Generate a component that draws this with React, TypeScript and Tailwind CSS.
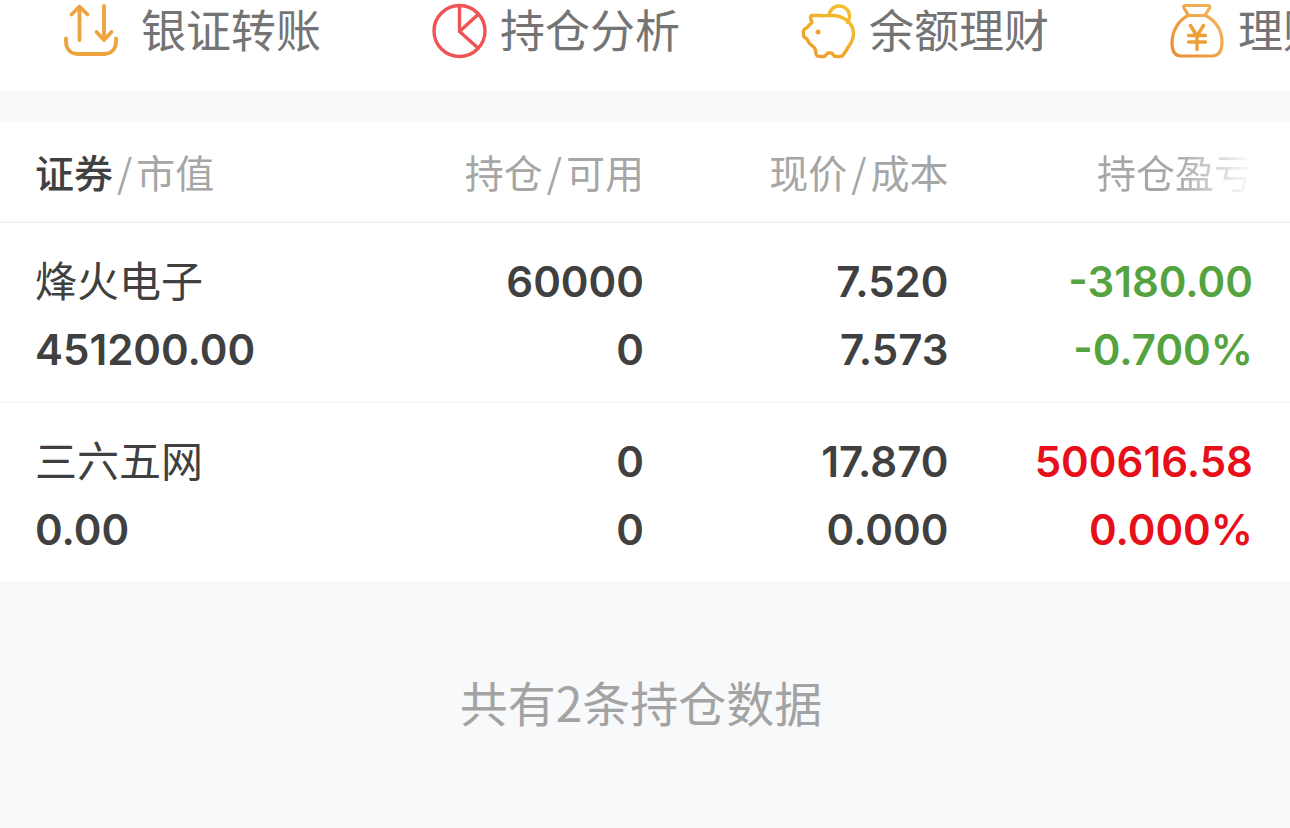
import type { ReactNode } from "react";

type Tone = "up" | "down";

interface Holding {
  name: string;
  value: string;
  amount: string;
  available: string;
  price: string;
  cost: string;
  profit: string;
  rate: string;
  tone: Tone;
}

const holdings: Holding[] = [
  { name: "烽火电子", value: "451200.00", amount: "60000", available: "0", price: "7.520", cost: "7.573", profit: "-3180.00", rate: "-0.700%", tone: "down" },
  { name: "三六五网", value: "0.00", amount: "0", available: "0", price: "17.870", cost: "0.000", profit: "500616.58", rate: "0.000%", tone: "up" },
];

const toneClass: Record<Tone, string> = {
  up: "text-[#e60f1a]",
  down: "text-[#55a33f]",
};

function Icon({ children }: { children: ReactNode }) {
  return (
    <svg className="size-[56px] shrink-0" viewBox="0 0 56 56" fill="none" strokeLinecap="round" strokeLinejoin="round" aria-hidden="true">
      {children}
    </svg>
  );
}

function TransferIcon() {
  return (
    <Icon>
      <g stroke="#eda33f" strokeWidth="3.8">
        <path d="M16.500 37V4M8.500 11.500l8-8 8 8" />
        <path d="M41 3v34M33.500 29l7.500 8 7.500-8" />
        <path d="M3 35.500v3c0 8 5 12.500 12 12.500h26c7 0 12-4.500 12-12.500v-3" />
      </g>
    </Icon>
  );
}

function PieIcon() {
  return (
    <Icon>
      <g stroke="#ef5355" strokeWidth="3.4">
        <circle cx="27.500" cy="28" r="25.500" />
        <path d="M27.500 3v25.500L45.500 12M27.500 28.500 46 45" />
      </g>
    </Icon>
  );
}

function PiggyIcon() {
  return (
    <Icon>
      <defs>
        <linearGradient id="piggy" x1="0" y1="56" x2="40" y2="0" gradientUnits="userSpaceOnUse">
          <stop stopColor="#eb982c" />
          <stop offset="1" stopColor="#f4c02f" />
        </linearGradient>
      </defs>
      <g stroke="url(#piggy)" strokeWidth="3.4">
        <path d="M10.500 12.500H19C22.500 13 24 12.500 29 12.500C43 12 52.500 20 52.500 31C52.500 36.500 50 39.500 48 43L42.500 51.500C41.500 53.500 40.500 53.500 38.500 53.500H35C31.500 53.500 33 50 30 50H27.500C24.500 50 26 53.500 22.500 53.500H18.500C13.500 53.500 15.500 49 14 45.500C11.500 42 8 41.500 6.500 37C5.500 34.500 2.500 35 2.500 32.500V28C2.500 25.500 5.500 26 7 23.500C8.500 21.500 11 20.500 11 19C10.500 17.500 8 15 10.500 12.500Z" />
        <path d="M28 11C30 6 33.500 3 38 3C44 3 48.500 7.500 48.500 13C48.500 15.500 48 17.500 46.500 19.500" />
      </g>
      <circle cx="17" cy="29" r="2.500" fill="#eda32f" />
    </Icon>
  );
}

function MoneyBagIcon() {
  return (
    <Icon>
      <defs>
        <linearGradient id="bag" x1="0" y1="50" x2="50" y2="10" gradientUnits="userSpaceOnUse">
          <stop stopColor="#e98d31" />
          <stop offset="1" stopColor="#f3b55c" />
        </linearGradient>
      </defs>
      <g stroke="url(#bag)" strokeWidth="3.2">
        <path d="M18 11.500 14 5C13.300 3.400 14 2.500 15.500 2.500H38C39.500 2.500 40.200 3.400 39.500 5L35.500 11.500" />
        <path d="M18 12.500H35.500C46 17.500 52 28 52 38.500C52 48 49 53 42 53H11.500C5 53 2 48 2 40C2 29 7.500 18 18 12.500Z" />
        <path d="m20.500 22.500 6.500 10.500 6.500-10.500M27 33v13.500M18.500 32.500h17M18.500 39h17" stroke="#eea038" strokeWidth="3.400" />
      </g>
    </Icon>
  );
}

const actions = [
  { label: "银证转账", icon: <TransferIcon />, gap: "gap-[22px]" },
  { label: "持仓分析", icon: <PieIcon />, gap: "gap-3" },
  { label: "余额理财", icon: <PiggyIcon />, gap: "gap-3" },
  { label: "理财产品", icon: <MoneyBagIcon />, gap: "gap-3" },
];

function Slash() {
  return <span className="mx-1">/</span>;
}

const rowClass = "grid grid-cols-4 pl-[35px] pr-[37px]";

export default function App() {
  return (
    <div className="flex min-h-screen flex-col overflow-x-hidden bg-[#f7f9fb] font-['Inter','Noto_Sans_CJK_SC',sans-serif] text-[#404040]">
      <nav className="flex h-[91px] overflow-hidden bg-white pl-[63px] text-[45px] leading-[62px] text-[#747474]">
        {actions.map((action) => (
          <a key={action.label} href="#" className={`flex h-[62px] w-[369px] shrink-0 items-center whitespace-nowrap ${action.gap}`}>
            {action.icon}
            <span className="pt-[2px]">{action.label}</span>
          </a>
        ))}
      </nav>

      <table className="mt-[30px] block bg-white">
        <thead className="block font-['Noto_Sans_CJK_SC',sans-serif]">
          <tr className={`${rowClass} border-b-2 border-[#f3f3f3] py-[26px] text-right text-[39px] leading-[48px] whitespace-nowrap text-[#a6a6a6]`}>
            <th className="text-left font-normal">
              <span className="font-medium text-[#404040]">证券</span>
              <Slash />
              市值
            </th>
            <th className="font-normal">持仓<Slash />可用</th>
            <th className="font-normal">现价<Slash />成本</th>
            <th className="font-normal">
              <span className="bg-linear-to-r from-[#a6a6a6] from-50% to-white to-100% bg-clip-text text-transparent">持仓盈亏</span>
            </th>
          </tr>
        </thead>
        <tbody className="block text-[42px] leading-[68px] font-semibold">
          {holdings.map((item) => (
            <tr key={item.name} className={`${rowClass} border-b-2 border-[#f7f7f7] pt-[25px] pb-[17px] text-right last:border-b-0`}>
              <td className="text-left">
                <div className="font-normal">{item.name}</div>
                <div>{item.value}</div>
              </td>
              <td>
                <div>{item.amount}</div>
                <div>{item.available}</div>
              </td>
              <td>
                <div>{item.price}</div>
                <div>{item.cost}</div>
              </td>
              <td className={toneClass[item.tone]}>
                <div>{item.profit}</div>
                <div>{item.rate}</div>
              </td>
            </tr>
          ))}
        </tbody>
      </table>

      <p className="pt-[84px] pr-2 text-center font-['Noto_Sans_CJK_SC',sans-serif] text-[48px] leading-[72px] text-[#a3a3a3]">
        共有2条持仓数据
      </p>
    </div>
  );
}
